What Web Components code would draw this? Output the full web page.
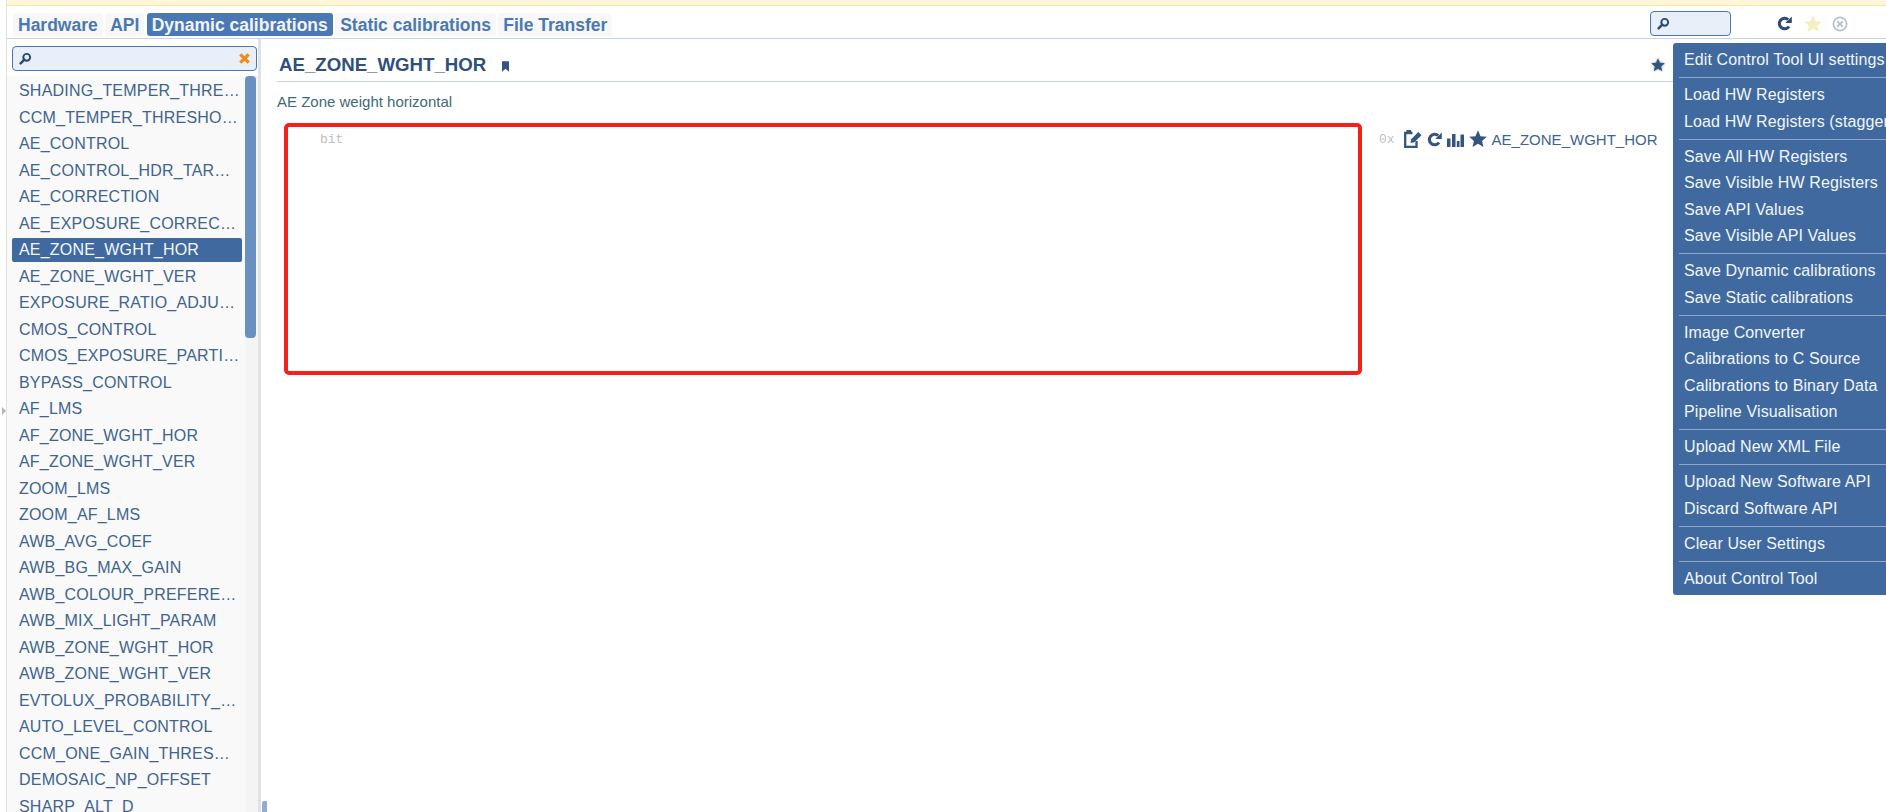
<!DOCTYPE html>
<html>
<head>
<meta charset="utf-8">
<title>Control Tool</title>
<style>
  html, body { margin: 0; height: 100%; overflow: hidden; background: #fff; }
  body { font-family: "Liberation Sans", Arial, sans-serif; color: #345a85; }
</style>
</head>
<body>
<ct-app></ct-app>

<script>
const ICONS = {
  search: '<svg viewBox="0 0 16 16" width="13" height="13"><circle cx="9.5" cy="6.5" r="4.2" fill="none" stroke="#2a4a75" stroke-width="2.4"/><path d="M6.5 9.5 2 14" stroke="#2a4a75" stroke-width="3" stroke-linecap="round"/></svg>',
  cross: '<svg viewBox="0 0 14 14" width="13" height="13"><path d="M2.5 2.5l9 9M11.5 2.5l-9 9" stroke="#f08c1e" stroke-width="3.6"/></svg>',
  bookmark: '<svg viewBox="0 0 8 12" width="7" height="11"><path d="M0 0h8v12L4 8.5 0 12z" fill="#33557f"/></svg>',
  star: '<svg viewBox="0 0 20 20" width="100%" height="100%"><path d="M10 .4l2.8 6.5 7 .6-5.3 4.6 1.6 6.9L10 15.3l-6.1 3.7 1.6-6.9L.2 7.500l7-.6z" fill="currentColor"/></svg>',
  refresh: '<svg viewBox="0 0 16 16" width="100%" height="100%"><path d="M12.8 11.200A5.600 5.600 0 1 1 11.900 3.900" fill="none" stroke="currentColor" stroke-width="3.300"/><path d="M8.800 7.400h7V.6z" fill="currentColor"/></svg>',
  edit: '<svg viewBox="0 0 18 18" width="100%" height="100%"><path d="M8.500 3H6V1.200H3.600V3H1.200v13.800H12.500V11" fill="none" stroke="currentColor" stroke-width="2.300"/><path d="M6.500 13l.7-3.800L14.300 2l3.200 3.200-7.200 7.100z" fill="currentColor"/></svg>',
  bars: '<svg viewBox="0 0 17 17" width="100%" height="100%"><path d="M0 7.500h3.500V16H0zM5 3h3.500v13H5zM9.800 10h2.700v6H9.800zM13.500 3.500H17V16h-3.500z" fill="currentColor"/></svg>',
  close: '<svg viewBox="0 0 16 16" width="100%" height="100%"><circle cx="8" cy="8" r="6.600" fill="none" stroke="currentColor" stroke-width="1.800"/><path d="M5.200 5.200l5.600 5.600M10.800 5.200l-5.600 5.600" stroke="currentColor" stroke-width="2"/></svg>'
};

function tpl(html) {
  const t = document.createElement('template');
  t.innerHTML = html;
  return t;
}

// plain search field, the x button only shows when the attribute is there
class CtSearch extends HTMLElement {
  constructor() {
    super();
    const shadow = this.attachShadow({ mode: 'open' });
    shadow.innerHTML = `
      <style>
        :host { display: flex; align-items: center; box-sizing: border-box; height: 25px; padding: 0 5px 0 6px;
                background: #e8eff8; border: 1px solid #4a78b4; border-radius: 4px; justify-content: space-between; }
        span { display: flex; }
      </style>
      <span>${ICONS.search}</span>
      ${this.hasAttribute('clearable') ? `<span>${ICONS.cross}</span>` : ''}`;
  }
}
customElements.define('ct-search', CtSearch);

class CtIcon extends HTMLElement {
  constructor() {
    super();
    const shadow = this.attachShadow({ mode: 'open' });
    const size = this.getAttribute('size') || 16;
    shadow.innerHTML = `
      <style>
        :host { display: inline-flex; width: ${size}px; height: ${size}px; color: ${this.getAttribute('color') || '#33557f'}; flex: none; }
      </style>
      ${ICONS[this.getAttribute('name')]}`;
  }
}
customElements.define('ct-icon', CtIcon);

class CtTabs extends HTMLElement {
  constructor() {
    super();
    const shadow = this.attachShadow({ mode: 'open' });
    const tabs = ['Hardware', 'API', 'Dynamic calibrations', 'Static calibrations', 'File Transfer'];
    shadow.innerHTML = `
      <style>
        :host { display: flex; align-items: flex-end; box-sizing: border-box; height: 33px; padding: 0 0 2px 6px;
                border-bottom: 1px solid #c5d5e6; }
        a { display: block; height: 23px; line-height: 24px; padding: 0 5px; margin-right: 2.4px; font-size: 17.5px; font-weight: bold;
            background: #f7f7f7; color: #4a78b4; border-radius: 3px; }
        a.on { background: #4a78b4; color: #f2f6fb; }
        .right { margin-left: auto; display: flex; align-items: center; }
        ct-search { width: 81px; }
        .tools { display: flex; align-items: center; margin: 0 38px 0 46px; }
        .tools ct-icon:nth-child(2) { margin: 0 10px 0 12px; }
      </style>
      ${tabs.map(t => `<a class="${t === 'Dynamic calibrations' ? 'on' : ''}">${t}</a>`).join('')}
      <div class="right">
        <ct-search></ct-search>
        <div class="tools">
          <ct-icon name="refresh" size="15" color="#2c4c74"></ct-icon>
          <ct-icon name="star" size="18" color="#f5eec0"></ct-icon>
          <ct-icon name="close" size="16" color="#b4c3d6"></ct-icon>
        </div>
      </div>`;
  }
}
customElements.define('ct-tabs', CtTabs);

class CtSidebar extends HTMLElement {
  constructor() {
    super();
    const shadow = this.attachShadow({ mode: 'open' });
    const items = ['SHADING_TEMPER_THRESHOLD', 'CCM_TEMPER_THRESHOLD', 'AE_CONTROL', 'AE_CONTROL_HDR_TARGET', 'AE_CORRECTION',
      'AE_EXPOSURE_CORRECTION', 'AE_ZONE_WGHT_HOR', 'AE_ZONE_WGHT_VER', 'EXPOSURE_RATIO_ADJUSTMENT', 'CMOS_CONTROL',
      'CMOS_EXPOSURE_PARTITION', 'BYPASS_CONTROL', 'AF_LMS', 'AF_ZONE_WGHT_HOR', 'AF_ZONE_WGHT_VER', 'ZOOM_LMS', 'ZOOM_AF_LMS',
      'AWB_AVG_COEF', 'AWB_BG_MAX_GAIN', 'AWB_COLOUR_PREFERENCE', 'AWB_MIX_LIGHT_PARAM', 'AWB_ZONE_WGHT_HOR', 'AWB_ZONE_WGHT_VER',
      'EVTOLUX_PROBABILITY_ENABLE', 'AUTO_LEVEL_CONTROL', 'CCM_ONE_GAIN_THRESHOLD', 'DEMOSAIC_NP_OFFSET', 'SHARP_ALT_D'];
    shadow.innerHTML = `
      <style>
        :host { display: flex; flex-direction: column; width: 254px; flex: none; box-sizing: border-box; height: 100%;
                border-right: 3px solid #e2e2e2; padding-top: 7px; overflow: hidden; }
        ct-search { margin: 0 1px 0 5px; flex: none; }
        .wrap { display: flex; flex: 1; min-height: 0; margin-top: 5px; }
        ul { list-style: none; margin: 0; padding: 3px 3px 0 5px; width: 238px; flex: none; box-sizing: border-box; background: #f9f9f9; overflow: hidden; }
        li { height: 24px; line-height: 24px; margin-bottom: 2.5px; padding: 0 2px 0 7px; font-size: 16px; letter-spacing: .2px; color: #3e648f;
             white-space: nowrap; overflow: hidden; text-overflow: ellipsis; border-radius: 2px; }
        li.on { background: #406a9f; color: #f4f7fb; }
        .track { flex: 1; padding-right: 2px; background: #f4f4f4; }
        .thumb { height: 262px; background: #6890c0; border-radius: 4px; }
      </style>
      <ct-search clearable></ct-search>
      <div class="wrap">
        <ul>${items.map(i => `<li class="${i === 'AE_ZONE_WGHT_HOR' ? 'on' : ''}">${i}</li>`).join('')}</ul>
        <div class="track"><div class="thumb"></div></div>
      </div>`;
  }
}
customElements.define('ct-sidebar', CtSidebar);

class CtPane extends HTMLElement {
  constructor() {
    super();
    const shadow = this.attachShadow({ mode: 'open' });
    shadow.innerHTML = `
      <style>
        :host { display: block; flex: 1; min-width: 0; padding: 0 213px 0 16px; }
        header { display: flex; align-items: center; height: 43px; padding: 10px 8px 0 2px; box-sizing: border-box; border-bottom: 1px solid #c5d5e6; }
        h1 { margin: 0 16px 0 0; font-size: 18.67px; font-weight: bold; color: #2f4f7c; }
        header ct-icon:last-child { margin-left: auto; filter: drop-shadow(0 0 1px rgba(51,85,127,.6)); }
        p { margin: 11px 0 0; font-size: 15px; line-height: 17px; color: #3d6a78; }
        .row { display: flex; margin: 13px 0 0 7px; }
        .box { box-sizing: border-box; width: 1078px; height: 252px; border: 4px solid #f5201a; border-radius: 5px;
               padding: 5px 0 0 32px; font: 13px "Liberation Mono", monospace; color: #c0c0c0; }
        .reg { display: flex; align-items: center; height: 32px; padding-left: 17px; gap: 5px; white-space: nowrap; font-size: 15px; color: #3e648f; }
        .hex { font: 13px "Liberation Mono", monospace; color: #c0c0c0; margin-right: 4px; }
      </style>
      <header>
        <h1>AE_ZONE_WGHT_HOR</h1>
        <ct-icon name="bookmark" size="8"></ct-icon>
        <ct-icon name="star" size="14"></ct-icon>
      </header>
      <p>AE Zone weight horizontal</p>
      <div class="row">
        <div class="box">bit</div>
        <div class="reg">
          <span class="hex">0x</span>
          <ct-icon name="edit" size="18"></ct-icon>
          <ct-icon name="refresh" size="15"></ct-icon>
          <ct-icon name="bars" size="17"></ct-icon>
          <ct-icon name="star" size="18"></ct-icon>
          <span>AE_ZONE_WGHT_HOR</span>
        </div>
      </div>`;
  }
}
customElements.define('ct-pane', CtPane);

// the settings menu that hangs over the page on the right
class CtMenu extends HTMLElement {
  constructor() {
    super();
    const shadow = this.attachShadow({ mode: 'open' });
    const groups = [
      ['Edit Control Tool UI settings'],
      ['Load HW Registers', 'Load HW Registers (staggered)'],
      ['Save All HW Registers', 'Save Visible HW Registers', 'Save API Values', 'Save Visible API Values'],
      ['Save Dynamic calibrations', 'Save Static calibrations'],
      ['Image Converter', 'Calibrations to C Source', 'Calibrations to Binary Data', 'Pipeline Visualisation'],
      ['Upload New XML File'],
      ['Upload New Software API', 'Discard Software API'],
      ['Clear User Settings'],
      ['About Control Tool']
    ];
    shadow.innerHTML = `
      <style>
        :host { position: absolute; left: 1673px; top: 43px; width: 213px; height: 552px; box-sizing: border-box; overflow: hidden;
                background: #406a9f; color: #f2f6fb; border-radius: 3px 0 0 3px; padding-top: 4px; font-size: 16px; letter-spacing: .12px; }
        div { height: 26.5px; line-height: 26.5px; padding-left: 11px; white-space: nowrap; }
        hr { height: 1px; border: 0; margin: 3.5px 0 4px 6px; background: #8fa7c4; }
      </style>
      ${groups.map(g => g.map(i => `<div>${i}</div>`).join('')).join('<hr>')}`;
  }
}
customElements.define('ct-menu', CtMenu);

class CtApp extends HTMLElement {
  constructor() {
    super();
    this.attachShadow({ mode: 'open' }).appendChild(tpl(`
      <style>
        :host { display: flex; height: 812px; position: relative; overflow: hidden; }
        .gutter { width: 6px; flex: none; border-right: 1px solid #e2e2e2; position: relative; }
        .gutter i { position: absolute; left: 2px; top: 407px; border: 4px solid transparent; border-left: 4px solid #b5b5b5; border-right: 0; }
        .main { flex: 1; min-width: 0; display: flex; flex-direction: column; }
        .banner { height: 6px; flex: none; box-sizing: border-box; background: #fdf6d9; border-bottom: 1px solid #f6e7a6; }
        .body { flex: 1; min-height: 0; display: flex; }
        .handle { position: absolute; left: 262px; top: 801px; width: 5px; height: 11px; background: #8fadd0; border-radius: 2px 0 0 0; }
      </style>
      <div class="gutter"><i></i></div>
      <div class="main">
        <div class="banner"></div>
        <ct-tabs></ct-tabs>
        <div class="body">
          <ct-sidebar></ct-sidebar>
          <ct-pane></ct-pane>
        </div>
      </div>
      <span class="handle"></span>
      <ct-menu></ct-menu>
    `).content.cloneNode(true));
  }
}
customElements.define('ct-app', CtApp);
</script>
</body>
</html>
